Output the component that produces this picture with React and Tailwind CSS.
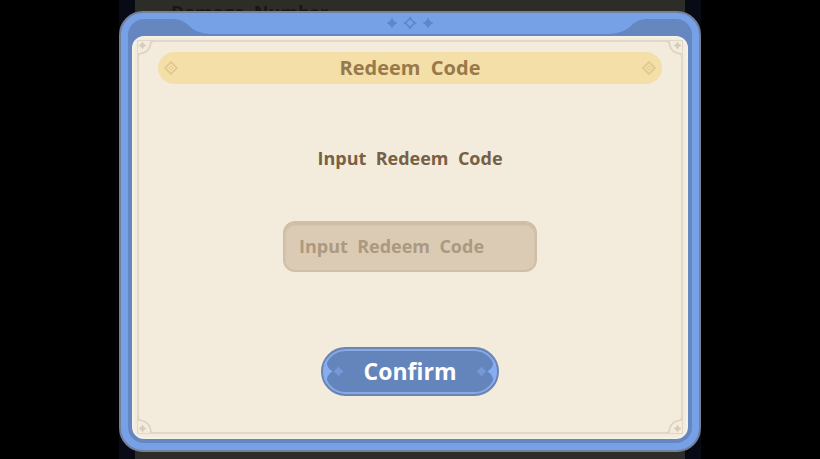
import { useState } from "react";

const corners = [
  "-left-px -top-px",
  "-right-px -top-px rotate-90",
  "-right-px -bottom-px rotate-180",
  "-left-px -bottom-px -rotate-90",
];

function CornerNotch({ className }) {
  return (
    <svg aria-hidden="true" viewBox="0 0 16 16" className={`absolute size-4 ${className}`}>
      <path d="M-2 -2H13V2C12.500 8 8 12.500 2 13H-2Z" fill="#f3ecdd" />
      <path d="M16 0.500H13C12.500 8 8 12.500 0.500 13V16" fill="none" stroke="#dfd1c0" strokeWidth="1.600" />
      <path d="M4.500 0.500L6 3L8.500 4.500L6 6L4.500 8.500L3 6L0.500 4.500L3 3Z" fill="#d8cbb9" />
    </svg>
  );
}

function FrameCurve({ className = "" }) {
  return (
    <svg aria-hidden="true" viewBox="0 0 84 15" className={`h-[15px] w-[84px] shrink-0 ${className}`}>
      <path d="M44 0H84V15C68 14 65 10 60 6C56 2 51 0 44 0Z" fill="#77a1e7" />
    </svg>
  );
}

function TitleDiamond() {
  return (
    <svg aria-hidden="true" viewBox="0 0 14 14" className="size-3.5" fill="none" stroke="#e2c98f">
      <path d="M7 1L13 7L7 13L1 7Z" strokeWidth="1.800" />
      <path d="M7 5L9 7L7 9L5 7Z" strokeWidth="1" />
    </svg>
  );
}

function FrameStars() {
  return (
    <svg aria-hidden="true" viewBox="0 0 48 14" className="h-3.5 w-12" fill="#5f86ca">
      <path d="M6 1.500Q7.500 5.500 11.500 7Q7.500 8.500 6 12.500Q4.500 8.500 0.500 7Q4.500 5.500 6 1.500Z" />
      <path d="M42 1.500Q43.500 5.500 47.500 7Q43.500 8.500 42 12.500Q40.500 8.500 36.500 7Q40.500 5.500 42 1.500Z" />
      <path fillRule="evenodd" d="M24 0Q26 5 31 7Q26 9 24 14Q22 9 17 7Q22 5 24 0ZM24 3.500L20.500 7L24 10.500L27.500 7Z" />
    </svg>
  );
}

function ButtonCap({ className = "" }) {
  return (
    <svg aria-hidden="true" viewBox="0 0 22 41" className={`h-[41px] w-[22px] ${className}`}>
      <path d="M4 8C3 14 5 18 9.500 20.500C5 23 3 27 4 33C-1 28 -1 13 4 8Z" fill="#86acf2" />
      <path d="M15.500 15.500Q17.500 18.500 20.500 20.500Q17.500 22.500 15.500 25.500Q13.500 22.500 10.500 20.500Q13.500 18.500 15.500 15.500Z" fill="#7797d6" />
    </svg>
  );
}

function RedeemDialog() {
  const [code, setCode] = useState("");

  return (
    <section
      role="dialog"
      aria-modal="true"
      aria-labelledby="redeem-title"
      className="w-[71%] min-w-80 rounded-3xl border-2 border-[#747f99] bg-[#77a1e7] px-[7px] pt-1.5 pb-[7px]"
    >
      <div className="rounded-2xl bg-[#6686c0] px-1 pb-1">
        <div className="-mx-1 flex pb-0.5">
          <FrameCurve />
          <div className="-mt-1 flex h-[19px] flex-1 items-center justify-center bg-[#77a1e7] pb-1">
            <FrameStars />
          </div>
          <FrameCurve className="-scale-x-100" />
        </div>
        <div className="rounded-xl border-2 border-[#f4f1e9] bg-[#f3ecdd] px-[3px] pt-0.5 pb-[3px]">
          <form
            onSubmit={(e) => e.preventDefault()}
            className="relative flex flex-col items-center border-2 border-[#e3d7c9] px-[19px] pt-[10px] pb-[36px]"
          >
            {corners.map((position) => (
              <CornerNotch key={position} className={position} />
            ))}
            <div className="flex h-8 w-full items-center justify-between rounded-full bg-[#f4dfa9] px-1.5">
              <TitleDiamond />
              <h1 id="redeem-title" className="text-xl leading-8 font-bold whitespace-pre text-[#98794a]">
                Redeem{"  "}Code
              </h1>
              <TitleDiamond />
            </div>
            <label htmlFor="code" className="mt-[62px] text-lg leading-6 font-bold whitespace-pre text-[#786044]">
              Input{"  "}Redeem{"  "}Code
            </label>
            <input
              id="code"
              type="text"
              value={code}
              onChange={(e) => setCode(e.target.value)}
              placeholder="Input  Redeem  Code"
              className="mt-[51px] h-[51px] w-[254px] rounded-xl border-2 border-[#d0bfa8] bg-[#dbcbb4] px-3.5 pb-0.5 text-lg font-bold text-[#786044] shadow-[inset_0_2px_2px_#cebca3] outline-none placeholder:text-[#ab9980]"
            />
            <button
              type="submit"
              className="mt-[75px] flex h-[49px] w-[178px] items-center justify-between rounded-full border-2 border-[#6d84af] bg-[#6484bc] text-[23px] font-bold text-white shadow-[inset_0_0_0_2px_#86a9ea]"
            >
              <ButtonCap />
              Confirm
              <ButtonCap className="-scale-x-100" />
            </button>
          </form>
        </div>
      </div>
    </section>
  );
}

export default function App() {
  return (
    <main className="relative min-h-screen overflow-hidden bg-black font-['Open_Sans','Noto_Sans',sans-serif]">
      <div className="mx-auto min-h-screen w-[71%] border-x-[16px] border-[#080b16] bg-[#2d2d28] px-9">
        <h2 className="text-lg leading-6 font-bold whitespace-pre text-[#171714]">Damage{"  "}Number</h2>
      </div>
      <div className="absolute inset-0 flex items-center justify-center pt-1">
        <RedeemDialog />
      </div>
    </main>
  );
}
